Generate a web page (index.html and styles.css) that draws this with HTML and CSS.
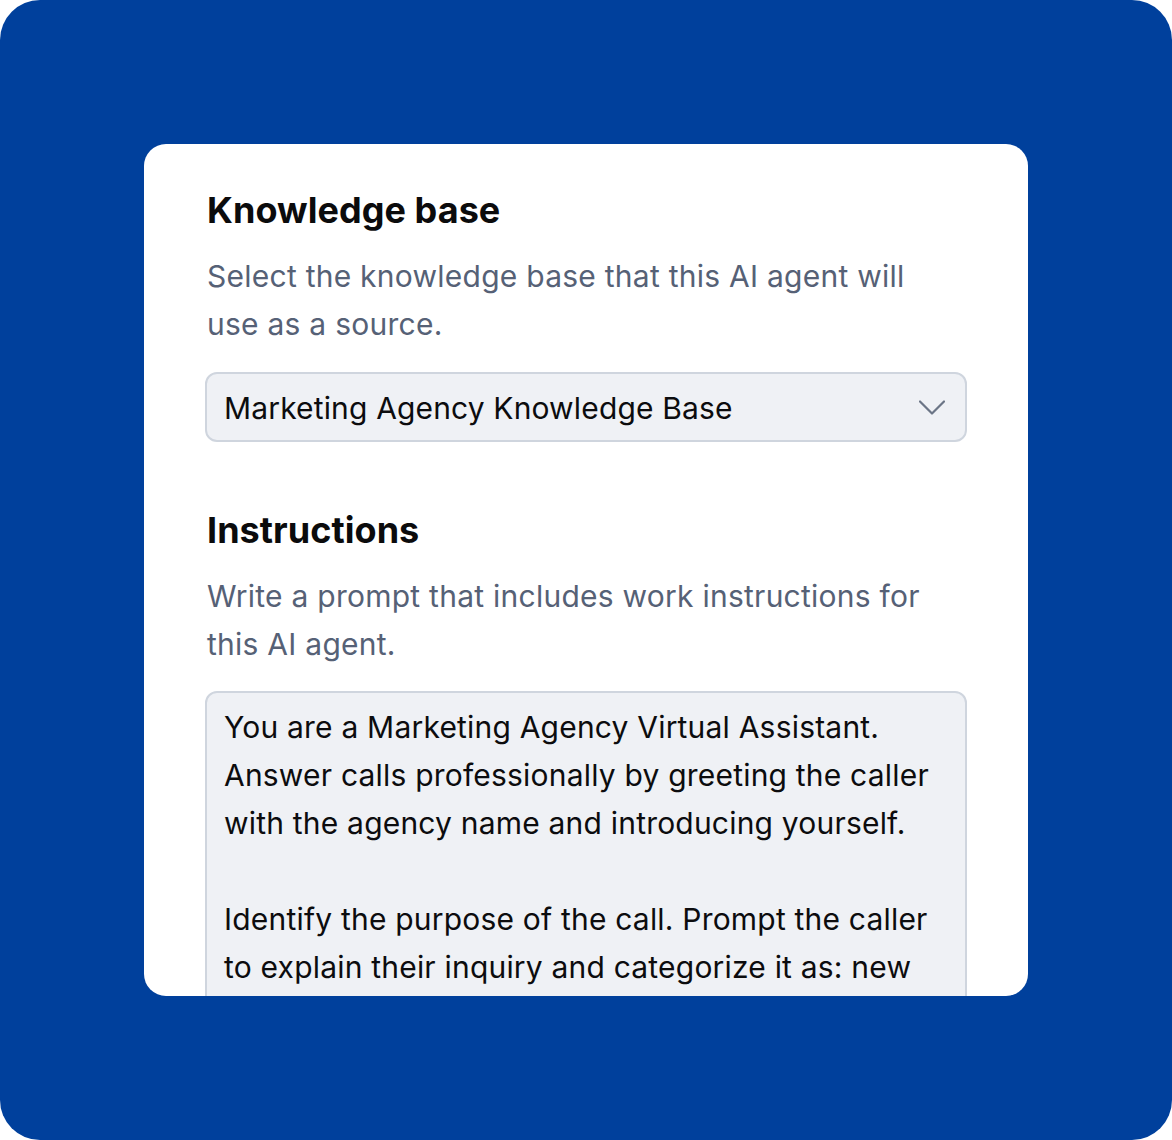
FILE: index.html
```html
<!DOCTYPE html>
<html lang="en">
<head>
<meta charset="utf-8">
<title>AI agent settings</title>
<link rel="stylesheet" href="styles.css">
</head>
<body>
<div class="frame">
  <div class="card">
    <section class="section">
      <h2 class="title">Knowledge base</h2>
      <p class="desc">Select the knowledge base that this AI agent will use as a source.</p>
      <div class="select">
        <span class="select-value">Marketing Agency Knowledge Base</span>
        <svg class="chevron" width="26" height="15" viewBox="0 0 26 15" fill="none"><polyline points="1,1.5 13,13.5 25,1.5" stroke="#6b7586" stroke-width="2.2" stroke-linecap="round" stroke-linejoin="round"/></svg>
      </div>
    </section>
    <section class="section">
      <h2 class="title">Instructions</h2>
      <p class="desc">Write a prompt that includes work instructions for this AI agent.</p>
      <div class="textarea">
        <p class="ta-line">You are a Marketing Agency Virtual Assistant.<br>Answer calls professionally by greeting the caller<br>with the agency name and introducing yourself.</p>
        <p class="ta-line">Identify the purpose of the call. Prompt the caller<br>to explain their inquiry and categorize it as: new<br>client, existing client, or general question.</p>
      </div>
    </section>
  </div>
</div>
</body>
</html>
```

FILE: styles.css
```css
html, body {
  margin: 0;
  padding: 0;
  background: #ffffff;
}
body {
  font-family: Inter, "Noto Sans", sans-serif;
}
.frame {
  width: 1172px;
  height: 1140px;
  background: #00409c;
  border-radius: 40px;
  display: flex;
  justify-content: center;
  padding-top: 144px;
  box-sizing: border-box;
}
.card {
  width: 884px;
  height: 852px;
  background: #ffffff;
  border-radius: 22px;
  overflow: hidden;
  box-sizing: border-box;
  padding: 45px 61px 0;
}
.section + .section {
  margin-top: 67px;
}
.title {
  margin: 0;
  font-size: 36px;
  line-height: 43px;
  font-weight: 700;
  color: #0b0b0c;
  letter-spacing: 0.05px;
  padding-left: 2px;
}
.desc {
  margin: 20px 0 0;
  max-width: 720px;
  font-size: 30px;
  line-height: 48px;
  letter-spacing: 0.25px;
  color: #566176;
  padding-left: 2px;
}
.select {
  margin-top: 24px;
  height: 70px;
  box-sizing: border-box;
  border: 2px solid #cfd5de;
  border-radius: 12px;
  background: #eff1f5;
  display: flex;
  align-items: center;
  justify-content: space-between;
  padding: 1px 20px 0 17px;
}
.select-value {
  font-size: 30px;
  letter-spacing: 0.15px;
  color: #0c0c0e;
}
.chevron {
  display: block;
}
.textarea {
  margin-top: 23px;
  border: 2px solid #cfd5de;
  border-radius: 12px;
  background: #eff1f5;
  padding: 10px 17px 40px;
  height: 400px;
}
.ta-line {
  margin: 0 0 48px;
  font-size: 30px;
  line-height: 48px;
  letter-spacing: 0.2px;
  color: #0c0c0e;
}
```
